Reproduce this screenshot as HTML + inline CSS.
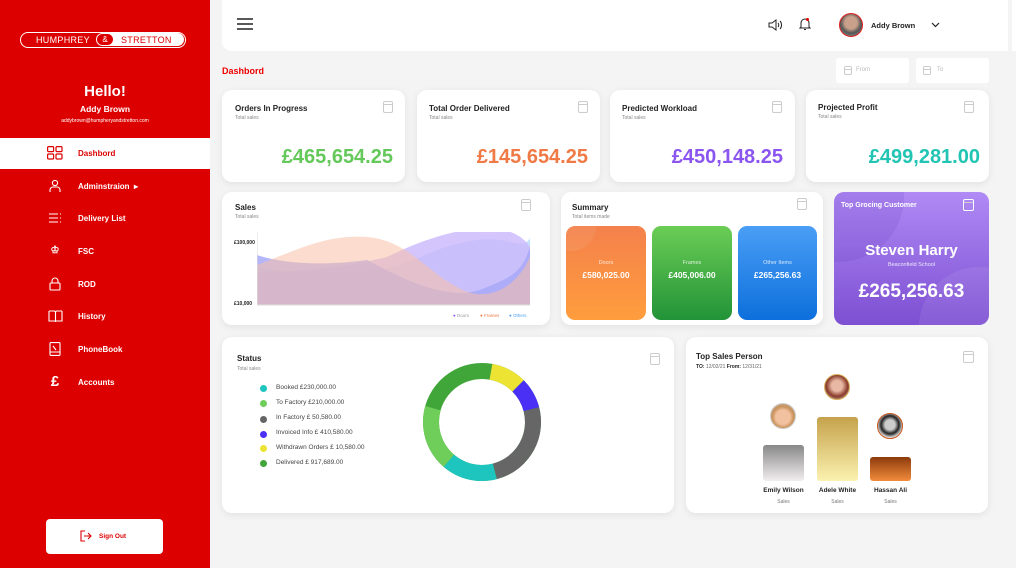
<!DOCTYPE html>
<html><head><meta charset="utf-8"><style>
*{margin:0;padding:0;box-sizing:border-box}
body{width:1016px;height:568px;overflow:hidden;background:#f4f4f4;font-family:"Liberation Sans",sans-serif;position:relative;color:#222}
.a{position:absolute}
.side{left:0;top:0;width:210px;height:568px;background:#dc0000;color:#fff}
.card{position:absolute;background:#fff;border-radius:10px;box-shadow:0 2px 8px rgba(0,0,0,.08)}
.t{position:absolute;font-size:8px;font-weight:bold;color:#222}
.s{position:absolute;font-size:5px;color:#888}
.v{position:absolute;right:12px;top:56px;font-size:20px;font-weight:bold}
.cal{position:absolute;width:10px;height:12px;border:1.2px solid #ccc;border-radius:2px}
.cal:before{content:"";position:absolute;left:0;right:0;top:2px;border-top:1.2px solid #ccc}
.nav{position:absolute;left:0;width:210px;height:31px;font-size:8px;font-weight:bold;color:#fff}
.nav span{position:absolute;left:78px;top:11px}
.nav i{position:absolute;left:47px;top:8px;width:16px;height:14px;font-style:normal;font-size:13px;line-height:14px;text-align:center}
.tile{position:absolute;top:34px;width:80px;height:94px;border-radius:9px;color:#fff;text-align:center;overflow:hidden}
.tile b{display:block;font-size:8.5px;margin-top:4px}
.tile small{display:block;font-size:5.5px;opacity:.8;margin-top:34px}
.dot{position:absolute;left:38px;width:7px;height:7px;border-radius:50%}
.lg{position:absolute;left:54px;font-size:6.5px;color:#444}
</style></head><body>
<div class="a side">
  <div class="a" style="left:20px;top:32px;width:166px;height:16px;border:1.5px solid #fff;border-radius:8px"></div>
  <div class="a" style="left:103px;top:33px;width:81px;height:13px;background:#fff;border-radius:0 7px 7px 0"></div>
  <div class="a" style="left:36px;top:35px;font-size:9px;letter-spacing:0.3px">HUMPHREY</div>
  <div class="a" style="left:96px;top:33px;width:18px;height:13px;border:1.3px solid #fff;border-radius:7px;background:#dc0000;font-size:8px;text-align:center;line-height:11px">&amp;</div>
  <div class="a" style="left:121px;top:35px;font-size:9px;color:#dc0000;letter-spacing:0.3px">STRETTON</div>
  <div class="a" style="left:0;width:210px;top:83px;text-align:center;font-size:15px;font-weight:bold">Hello!</div>
  <div class="a" style="left:0;width:210px;top:104px;text-align:center;font-size:8.5px;font-weight:bold">Addy Brown</div>
  <div class="a" style="left:0;width:210px;top:118px;text-align:center;font-size:5px">addybrown@humpheryandstretton.com</div>
  <div class="nav" style="top:138px;background:#fff;color:#dc0000"><i style="color:#dc0000">
    <svg width="16" height="14" viewBox="0 0 16 14" fill="none" stroke="#dc0000" stroke-width="1.2"><rect x="0.6" y="0.6" width="6" height="5" rx="1"/><rect x="9" y="0.6" width="6" height="5" rx="1"/><rect x="0.6" y="8" width="6" height="5" rx="1"/><rect x="9" y="8" width="6" height="5" rx="1"/></svg></i><span>Dashbord</span></div>
  <div class="nav" style="top:171px"><i><svg width="14" height="14" viewBox="0 0 14 14" fill="none" stroke="#fff" stroke-width="1.1"><circle cx="7" cy="4" r="2.6"/><path d="M2 13v-2a3 3 0 0 1 3-3h4a3 3 0 0 1 3 3v2"/></svg></i><span>Adminstraion &nbsp;▸</span></div>
  <div class="nav" style="top:203px"><i><svg width="14" height="14" viewBox="0 0 14 14" stroke="#fff" stroke-width="1.1"><path d="M1 3h9M1 7h9M1 11h9M12 3h1M12 7h1M12 11h1"/></svg></i><span>Delivery List</span></div>
  <div class="nav" style="top:236px"><i style="font-size:10px">♔</i><span>FSC</span></div>
  <div class="nav" style="top:269px"><i><svg width="14" height="14" viewBox="0 0 14 14" fill="none" stroke="#fff" stroke-width="1.1"><rect x="2" y="6" width="10" height="7" rx="1"/><path d="M4 6V4a3 3 0 0 1 6 0v2"/></svg></i><span>ROD</span></div>
  <div class="nav" style="top:301px"><i><svg width="15" height="14" viewBox="0 0 15 14" fill="none" stroke="#fff" stroke-width="1.1"><path d="M1 2h5a1.5 1.5 0 0 1 1.5 1.5V13M14 2H9a1.5 1.5 0 0 0-1.5 1.5M1 2v10h6.5M14 2v10H7.5"/></svg></i><span>History</span></div>
  <div class="nav" style="top:334px"><i><svg width="14" height="14" viewBox="0 0 14 14" fill="none" stroke="#fff" stroke-width="1.1"><rect x="2" y="0.6" width="10" height="12.8" rx="1"/><path d="M2 10h10M5 4l3 4"/></svg></i><span>PhoneBook</span></div>
  <div class="nav" style="top:367px"><i style="font-size:15px">£</i><span>Accounts</span></div>
  <div class="a" style="left:46px;top:519px;width:117px;height:35px;background:#fff;border-radius:4px"></div>
  <svg class="a" style="left:80px;top:530px" width="12" height="12" viewBox="0 0 12 12" fill="none" stroke="#dc0000" stroke-width="1.1"><path d="M5 1H1v10h4M4 6h7M8 3l3 3-3 3"/></svg>
  <div class="a" style="left:99px;top:533px;font-size:6.5px;font-weight:bold;color:#dc0000">Sign Out</div>
</div>

<!-- header -->
<div class="a" style="left:222px;top:0;width:786px;height:51px;background:#fff;border-radius:0 0 0 10px"></div>
<div class="a" style="left:1012px;top:0;width:4px;height:51px;background:#fff"></div>
<svg class="a" style="left:237px;top:18px" width="16" height="12" viewBox="0 0 16 12" stroke="#222" stroke-width="1.6"><path d="M0 1h16M0 6h16M0 11h16"/></svg>
<svg class="a" style="left:768px;top:19px" width="15" height="12" viewBox="0 0 15 12" fill="none" stroke="#222" stroke-width="1"><path d="M1 4h3l4-3v10l-4-3H1z M10 4c1 1 1 3 0 4M12 2c2 2 2 6 0 8"/></svg>
<svg class="a" style="left:799px;top:17px" width="12" height="14" viewBox="0 0 12 14" fill="none" stroke="#222" stroke-width="1"><path d="M2 10V6a4 4 0 0 1 8 0v4l1 1H1z M5 12.5h2"/><circle cx="8.5" cy="2.5" r="1.5" fill="#e00" stroke="none"/></svg>
<div class="a" style="left:839px;top:13px;width:24px;height:24px;border-radius:50%;border:1.5px solid #e02020;background:radial-gradient(circle at 50% 40%,#c9a08a 0 35%,#555 60%,#9aa 100%)"></div>
<div class="a" style="left:871px;top:21px;font-size:7.5px;font-weight:bold">Addy Brown</div>
<svg class="a" style="left:931px;top:22px" width="9" height="6" viewBox="0 0 9 6" fill="none" stroke="#222" stroke-width="1.2"><path d="M1 1l3.5 3.5L8 1"/></svg>

<div class="a" style="left:222px;top:66px;font-size:9px;font-weight:bold;color:#e00">Dashbord</div>
<div class="a" style="left:836px;top:58px;width:73px;height:25px;background:#fff;border-radius:3px"></div>
<div class="cal" style="left:844px;top:66px;width:8px;height:9px"></div><div class="a" style="left:856px;top:67px;font-size:6px;color:#bbb">From</div>
<div class="a" style="left:916px;top:58px;width:73px;height:25px;background:#fff;border-radius:3px"></div>
<div class="cal" style="left:923px;top:66px;width:8px;height:9px"></div><div class="a" style="left:937px;top:67px;font-size:6px;color:#bbb">To</div>

<!-- row1 -->
<div class="card" style="left:222px;top:90px;width:183px;height:92px"><div class="t" style="left:13px;top:14px">Orders In Progress</div><div class="s" style="left:13px;top:25px">Total sales</div><div class="cal" style="left:161px;top:11px"></div><div class="v" style="color:#64c85a">£465,654.25</div></div>
<div class="card" style="left:417px;top:90px;width:183px;height:92px"><div class="t" style="left:12px;top:14px">Total Order Delivered</div><div class="s" style="left:12px;top:25px">Total sales</div><div class="cal" style="left:161px;top:11px"></div><div class="v" style="color:#f07a45">£145,654.25</div></div>
<div class="card" style="left:610px;top:90px;width:185px;height:92px"><div class="t" style="left:12px;top:14px">Predicted Workload</div><div class="s" style="left:12px;top:25px">Total sales</div><div class="cal" style="left:162px;top:11px"></div><div class="v" style="color:#8b55f0">£450,148.25</div></div>
<div class="card" style="left:806px;top:90px;width:183px;height:92px"><div class="t" style="left:12px;top:13px">Projected Profit</div><div class="s" style="left:12px;top:24px">Total sales</div><div class="cal" style="left:158px;top:11px"></div><div class="v" style="color:#22c4b4;right:9px">£499,281.00</div></div>

<!-- sales -->
<div class="card" style="left:222px;top:192px;width:328px;height:133px">
  <div class="t" style="left:13px;top:11px">Sales</div><div class="s" style="left:13px;top:22px">Total sales</div><div class="cal" style="left:299px;top:7px"></div>
  <div class="a" style="left:12px;top:48px;font-size:5px;font-weight:bold">£100,000</div>
  <div class="a" style="left:12px;top:109px;font-size:5px;font-weight:bold">£10,000</div>
  <svg class="a" style="left:35px;top:40px" width="275" height="75" viewBox="0 0 275 75">
    <path d="M0 35C30 40 60 45 120 38C160 33 170 15 220 8C250 3 265 20 273 6V73H0z" fill="#b8dcfa" opacity=".8"/>
    <path d="M0 40C40 40 90 35 130 25C180 0 250 -20 273 15V73H0z" fill="#c9b6fb" opacity=".8"/>
    <path d="M0 23C20 30 60 35 110 28C160 55 200 70 230 55C255 45 265 40 273 15V73H0z" fill="#a8a8f8" opacity=".85"/>
    <path d="M0 33C40 18 70 2 110 5C150 8 170 40 200 55C230 73 260 55 273 25V73H0z" fill="#f7c0a6" opacity=".55"/>
    <path d="M0 0V73H273" fill="none" stroke="#ddd" stroke-width="1"/>
  </svg>
  <div class="a" style="left:231px;top:121px;font-size:4.5px;color:#8b55f0">● <span style="color:#999">Doors</span></div>
  <div class="a" style="left:258px;top:121px;font-size:4.5px;color:#f07a45">● <span style="color:#f07a45">Frames</span></div>
  <div class="a" style="left:287px;top:121px;font-size:4.5px;color:#4aa0f0">● <span style="color:#4aa0f0">Others</span></div>
</div>

<!-- summary -->
<div class="card" style="left:561px;top:192px;width:262px;height:133px">
  <div class="t" style="left:11px;top:11px">Summary</div><div class="s" style="left:11px;top:22px">Total items made</div><div class="cal" style="left:236px;top:6px"></div>
  <div class="tile" style="left:5px;background:linear-gradient(#f4814c,#ff9d3d)"><div class="a" style="left:-20px;top:-25px;width:50px;height:50px;border-radius:50%;background:rgba(255,255,255,.07)"></div><small>Doors</small><b>£580,025.00</b></div>
  <div class="tile" style="left:91px;background:linear-gradient(#6bcd55,#229338)"><small>Frames</small><b>£405,006.00</b></div>
  <div class="tile" style="left:177px;width:79px;background:linear-gradient(#4a9ef5,#0d6fdc)"><small>Other Items</small><b>£265,256.63</b></div>
</div>

<!-- top customer -->
<div class="a" style="left:834px;top:192px;width:155px;height:133px;border-radius:10px;overflow:hidden;background:linear-gradient(#b08af5,#7d4fd2);color:#fff">
  <div class="a" style="left:-60px;top:-60px;width:130px;height:130px;border-radius:50%;background:rgba(80,40,170,.12)"></div>
  <div class="a" style="left:85px;top:75px;width:120px;height:120px;border-radius:50%;background:rgba(255,255,255,.08)"></div>
  <div class="a" style="left:7px;top:10px;font-size:7px;font-weight:bold">Top Grocing Customer</div>
  <div class="cal" style="left:129px;top:7px;border-color:#fff;width:11px"></div>
  <div class="a" style="left:0;width:155px;top:50px;text-align:center;font-size:15px;font-weight:bold">Steven Harry</div>
  <div class="a" style="left:0;width:155px;top:70px;text-align:center;font-size:5.5px;opacity:.85">Beaconfield School</div>
  <div class="a" style="left:0;width:155px;top:89px;text-align:center;font-size:19px;font-weight:bold">£265,256.63</div>
</div>

<!-- status -->
<div class="card" style="left:222px;top:337px;width:452px;height:176px">
  <div class="t" style="left:15px;top:17px">Status</div><div class="s" style="left:15px;top:29px">Total sales</div><div class="cal" style="left:428px;top:16px"></div>
  <div class="dot" style="top:48px;background:#1ec4be"></div><div class="lg" style="top:47px">Booked £230,000.00</div>
  <div class="dot" style="top:63px;background:#6fcd5a"></div><div class="lg" style="top:62px">To Factory £210,000.00</div>
  <div class="dot" style="top:79px;background:#666"></div><div class="lg" style="top:77px">In Factory £ 50,580.00</div>
  <div class="dot" style="top:94px;background:#4a2ff5"></div><div class="lg" style="top:92px">Invoiced Info £ 410,580.00</div>
  <div class="dot" style="top:108px;background:#ece332"></div><div class="lg" style="top:107px">Withdrawn Orders £ 10,580.00</div>
  <div class="dot" style="top:123px;background:#41a63a"></div><div class="lg" style="top:122px">Delivered £ 917,689.00</div>
  <svg class="a" style="left:200px;top:25px" width="120" height="120" viewBox="0 0 120 120">
    <g transform="rotate(-90 60 60)" fill="none" stroke-width="16">
      <circle cx="60" cy="60" r="51" stroke="#41a63a"/>
      <circle cx="60" cy="60" r="51" stroke="#ece332" stroke-dasharray="31 400" stroke-dashoffset="-9"/>
      <circle cx="60" cy="60" r="51" stroke="#4a2ff5" stroke-dasharray="27 400" stroke-dashoffset="-40"/>
      <circle cx="60" cy="60" r="51" stroke="#666" stroke-dasharray="80 400" stroke-dashoffset="-67"/>
      <circle cx="60" cy="60" r="51" stroke="#1ec4be" stroke-dasharray="49 400" stroke-dashoffset="-147"/>
      <circle cx="60" cy="60" r="51" stroke="#6fcd5a" stroke-dasharray="58 400" stroke-dashoffset="-196"/>
    </g>
  </svg>
</div>

<!-- top sales person -->
<div class="card" style="left:686px;top:337px;width:302px;height:176px">
  <div class="t" style="left:10px;top:15px">Top Sales Person</div>
  <div class="a" style="left:10px;top:27px;font-size:5px;color:#666"><b style="color:#222">TO:</b> 12/02/21 <b style="color:#222">From:</b> 12/31/21</div>
  <div class="cal" style="left:277px;top:14px;width:11px"></div>
  <div class="a" style="left:77px;top:108px;width:41px;height:36px;border-radius:3px;background:linear-gradient(#888,#f2eef0)"></div>
  <div class="a" style="left:131px;top:80px;width:41px;height:64px;border-radius:3px;background:linear-gradient(#c5a24c,#fbf2b0)"></div>
  <div class="a" style="left:184px;top:120px;width:41px;height:24px;border-radius:3px;background:linear-gradient(#8c3a0c,#f28c3c)"></div>
  <div class="a" style="left:84px;top:66px;width:26px;height:26px;border-radius:50%;border:1px solid #ccc;background:radial-gradient(circle at 50% 55%,#f1c1a0 0 40%,#c9925a 60%,#bbb 100%)"></div>
  <div class="a" style="left:138px;top:37px;width:26px;height:26px;border-radius:50%;border:1.5px solid #d8b25a;background:radial-gradient(circle at 50% 45%,#e8b8a4 0 30%,#8a3b2a 60%,#ddd 100%)"></div>
  <div class="a" style="left:191px;top:76px;width:26px;height:26px;border-radius:50%;border:1.5px solid #c8561a;background:radial-gradient(circle at 50% 45%,#ccc 0 28%,#222 50%,#fff 75%)"></div>
  <div class="a" style="left:72px;width:51px;top:150px;text-align:center;font-size:6.5px;font-weight:bold">Emily Wilson</div>
  <div class="a" style="left:126px;width:51px;top:150px;text-align:center;font-size:6.5px;font-weight:bold">Adele White</div>
  <div class="a" style="left:179px;width:51px;top:150px;text-align:center;font-size:6.5px;font-weight:bold">Hassan Ali</div>
  <div class="a" style="left:72px;width:51px;top:162px;text-align:center;font-size:5px;color:#777">Sales</div>
  <div class="a" style="left:126px;width:51px;top:162px;text-align:center;font-size:5px;color:#777">Sales</div>
  <div class="a" style="left:179px;width:51px;top:162px;text-align:center;font-size:5px;color:#777">Sales</div>
</div>
</body></html>
